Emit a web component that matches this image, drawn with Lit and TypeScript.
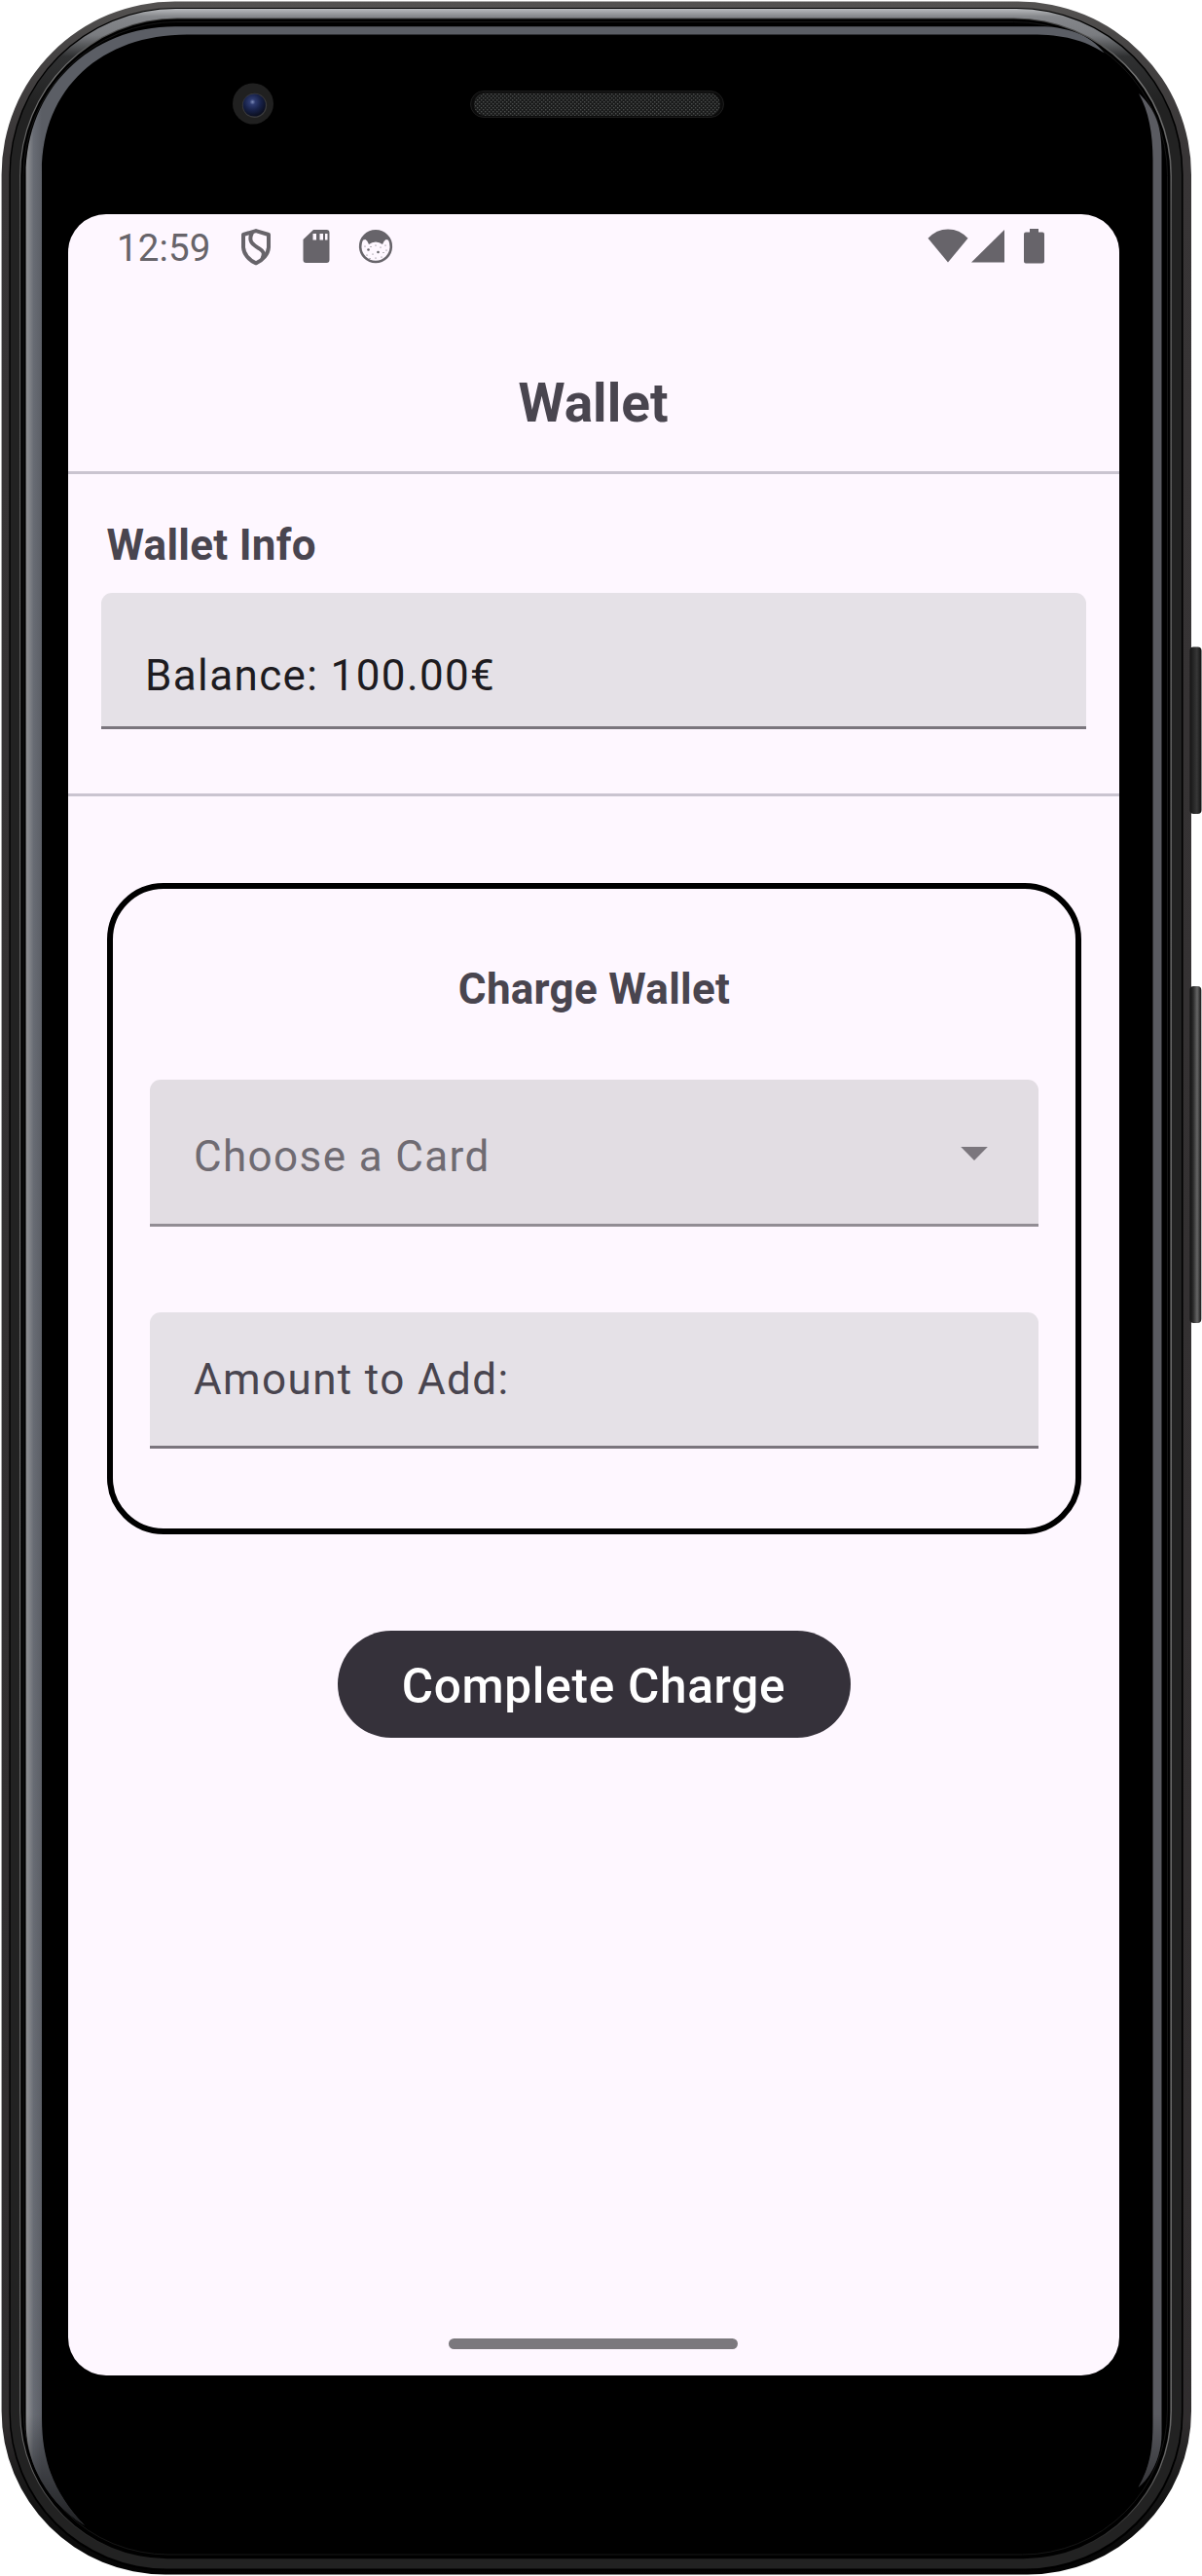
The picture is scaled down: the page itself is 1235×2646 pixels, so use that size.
import { LitElement, html, css, svg } from "lit";
import { customElement, property } from "lit/decorators.js";

/** Rounded rectangle outline, from edge to edge. */
const rr = (l: number, t: number, r: number, b: number, rt: number, rb = rt) =>
  `M${l + rt} ${t}H${r - rt}A${rt} ${rt} 0 0 1 ${r} ${t + rt}V${b - rb}A${rb} ${rb} 0 0 1 ${r - rb} ${b}H${l + rb}A${rb} ${rb} 0 0 1 ${l} ${b - rb}V${t + rt}A${rt} ${rt} 0 0 1 ${l + rt} ${t}Z`;

/** Light reflected along the inner edge of the glass. */
const glareLeft =
  "M26.6 2488V180C26.6 92 92 27.2 180 27.2H1068C1095 27.2 1120 35 1134.5 54.5C1114 41 1092 35.5 1060 35.5H192C105 35.5 43 90 43 176V2484C43 2530 57 2563 87 2594C48 2570 26.6 2530 26.6 2488Z";
const glareRight =
  "M1170 96C1187 112 1193.5 130 1193.5 156V2500C1193.5 2522 1184 2543 1169.5 2555C1180 2536 1184.5 2520 1184.5 2490V165C1184.5 136 1180 114 1170 96Z";

@customElement("device-frame")
export class DeviceFrame extends LitElement {
  static styles = css`
    :host { display: block; width: 1235px; height: 2646px; }
    svg { display: block; }
  `;
  render() {
    return html`<svg width="1235" height="2646" viewBox="0 0 1235 2646" aria-hidden="true">
      <defs>
        <linearGradient id="shell" x1="0" y1="0" x2="0" y2="2646" gradientUnits="userSpaceOnUse">
          <stop offset="0" stop-color="#555352" /><stop offset=".02" stop-color="#454343" />
          <stop offset=".06" stop-color="#383536" /><stop offset=".94" stop-color="#302d2e" />
          <stop offset=".965" stop-color="#181818" /><stop offset="1" stop-color="#020202" />
        </linearGradient>
        <linearGradient id="rim" x1="0" y1="8" x2="0" y2="108" gradientUnits="userSpaceOnUse">
          <stop offset="0" stop-color="#bfc1c4" /><stop offset=".09" stop-color="#85878b" />
          <stop offset=".28" stop-color="#7a7c80" /><stop offset=".5" stop-color="#303132" />
          <stop offset="1" stop-color="#222" />
        </linearGradient>
        <linearGradient id="line" x1="0" y1="0" x2="0" y2="2646" gradientUnits="userSpaceOnUse">
          <stop offset="0" stop-color="#333" /><stop offset=".03" stop-color="#777" />
          <stop offset=".08" stop-color="#555" /><stop offset=".5" stop-color="#6a6a6a" />
          <stop offset=".96" stop-color="#666" /><stop offset=".99" stop-color="#222" />
        </linearGradient>
        <linearGradient id="left" x1="26" y1="0" x2="43" y2="0" gradientUnits="userSpaceOnUse">
          <stop offset="0" stop-color="#8f9093" /><stop offset=".2" stop-color="#85878b" />
          <stop offset=".5" stop-color="#686c74" /><stop offset="1" stop-color="#5b5e65" />
        </linearGradient>
        <linearGradient id="fade" x1="0" y1="2480" x2="0" y2="2595" gradientUnits="userSpaceOnUse">
          <stop offset="0" stop-color="#000" stop-opacity="0" /><stop offset="1" stop-color="#000" stop-opacity=".65" />
        </linearGradient>
        <linearGradient id="key" x1="1222" y1="0" x2="1235" y2="0" gradientUnits="userSpaceOnUse">
          <stop offset="0" stop-color="#111" /><stop offset=".25" stop-color="#222" />
          <stop offset=".6" stop-color="#373737" /><stop offset="1" stop-color="#0c0c0c" />
        </linearGradient>
        <linearGradient id="keyLong" x1="1222" y1="0" x2="1235" y2="0" gradientUnits="userSpaceOnUse">
          <stop offset="0" stop-color="#0c0c0c" /><stop offset=".3" stop-color="#2b2b2b" />
          <stop offset=".62" stop-color="#666" /><stop offset=".85" stop-color="#2d2d2d" /><stop offset="1" stop-color="#0c0c0c" />
        </linearGradient>
        <radialGradient id="lens" cx=".42" cy=".36" r=".62">
          <stop offset="0" stop-color="#7d8bb8" /><stop offset=".2" stop-color="#2e3b70" />
          <stop offset=".6" stop-color="#172148" /><stop offset="1" stop-color="#0c1022" />
        </radialGradient>
        <pattern id="mesh" width="4" height="4" patternUnits="userSpaceOnUse">
          <rect width="4" height="4" fill="#1a1b1b" />
          <rect width="1.4" height="1.4" fill="#4a4d4c" /><rect x="2" y="2" width="1.4" height="1.4" fill="#4a4d4c" />
        </pattern>
      </defs>
      <path d=${rr(1.6, 1.5, 1224, 2644.5, 178, 168)} fill="url(#shell)" />
      <path d=${rr(9.4, 8, 1215.6, 2640.5, 171, 162)} fill="#000" />
      <path d=${rr(10.8, 9, 1214, 2638.5, 170, 161)} fill="url(#rim)" />
      <path d=${rr(20, 18.5, 1204, 2628.5, 162, 152)} fill="url(#line)" />
      <path d=${rr(21.2, 19.5, 1202.4, 2628.2, 161, 151)} fill="#000" />
      <path d=${rr(24, 22.5, 1199.5, 2624, 158, 149)} fill="none" stroke="#161616" stroke-width="1" />
      <rect x="1222.500" y="664.500" width="12" height="171.500" rx="4" fill="url(#key)" />
      <rect x="1222.500" y="1013" width="11.800" height="346" rx="4" fill="url(#keyLong)" />
      <path d=${glareLeft} fill="url(#left)" />
      <path d=${glareLeft} fill="url(#fade)" />
      <path d=${glareRight} fill="#5a5b61" />
      <path d=${glareRight} fill="url(#fade)" />
      <circle cx="260" cy="106.5" r="21" fill="#202020" />
      <circle cx="261.5" cy="108.3" r="12.6" fill="#3a3a3c" />
      <circle cx="261.3" cy="108" r="11.6" fill="url(#lens)" />
      <rect x="483.5" y="93.5" width="260" height="27" rx="13.5" fill="#0b0b0b" stroke="#1d1d1d" />
      <rect x="487" y="95.5" width="253" height="23.5" rx="11.7" fill="url(#mesh)" />
    </svg>`;
  }
}

@customElement("status-bar")
export class StatusBar extends LitElement {
  static styles = css`
    :host {
      display: flex; box-sizing: border-box; width: 1080px; height: 66px;
      padding: 15px 77px 0 50px; justify-content: space-between; align-items: flex-start;
      color: #67646a; font: 400 38.5px/40px Roboto, sans-serif;
    }
    .group { display: flex; align-items: flex-start; }
    .time { width: 97px; margin-right: 30px; letter-spacing: .1px; }
    .shield { margin-right: 32px; }
    .sd { margin-right: 29px; }
    .signal { margin: 1px 20px 0 3px; }
    svg { display: block; fill: currentColor; }
    .outline { fill: none; stroke: currentColor; stroke-width: 4; stroke-linejoin: round; }
  `;
  render() {
    return html`
      <div class="group">
        <span class="time">12:59</span>
        <svg class="shield" width="32" height="38" viewBox="0 0 32 38">
          <path class="outline" d="M16 2.1L29 6V18C29 26 23 32.5 16 35.3C9 32.5 3 26 3 18V6Z" />
          <path class="outline" d="M12 4C7.500 13 13 16 18 19.500C24 23 25 25 22.500 30.500" />
        </svg>
        <svg class="sd" width="28" height="36" viewBox="0 0 28 36">
          <path fill-rule="evenodd" d="M11 1H24.500Q27.500 1 27.500 4V32Q27.500 35 24.500 35H3.500Q.5 35 .5 32V11ZM10.500 5V11.500H14V5ZM17.500 5V11.500H21V5ZM23 5V11.500H25.500V5Z" />
        </svg>
        <svg width="36" height="36" viewBox="0 0 36 36">
          <circle cx="18" cy="18.200" r="15.800" fill="none" stroke="currentColor" stroke-width="2.600" />
          <path d="M4.500 11.500L7 7Q18 -2.500 29 7L31.500 11.500L28.500 11Q26.500 12 25 16Q22 13.500 18 13.500Q14 13.500 11 16Q9.500 12 7.500 11Z" />
          ${[[7, 18], [13, 18.500], [18, 17], [23, 19], [28, 17], [29, 22], [26, 24.500], [15, 26], [9, 27], [12, 30.500], [18, 30], [24, 29]].map(
            ([x, y]) => svg`<circle cx=${x} cy=${y} r=".6" />`)}
          <circle cx="10.500" cy="21.500" r="1.300" /><circle cx="20.500" cy="24" r="1.300" />
        </svg>
      </div>
      <div class="group">
        <svg width="42" height="36" viewBox="0 0 42 36"><path d="M21 34.500L.5 9.800Q9 .6 21 .5Q33 .6 41.500 9.800Z" /></svg>
        <svg class="signal" width="34" height="34" viewBox="0 0 34 34"><path d="M34 0V33.500H0Z" /></svg>
        <svg width="21" height="36" viewBox="0 0 21 36"><path d="M6 0H15V3.500H19Q21 3.500 21 5.500V33.500Q21 35.500 19 35.500H2Q0 35.500 0 33.500V5.500Q0 3.500 2 3.500H6Z" /></svg>
      </div>`;
  }
}

@customElement("filled-field")
export class FilledField extends LitElement {
  @property() text = "";
  static styles = css`
    :host {
      display: flex; box-sizing: border-box; height: 140px; padding: 0 44px 0 45px;
      align-items: center; justify-content: space-between;
      background: #e5e1e7; border-bottom: 3px solid #7a757d; border-radius: 11px 11px 0 0;
      color: #49454f; font: 400 44px/66px Roboto, sans-serif; letter-spacing: 1.375px;
    }
    :host([filled]) { color: #1d1b20; }
    :host([menu]) { height: 151px; background: #e2dde3; border-color: #928d94; color: #6f6b72; padding-right: 52px; }
    .text { padding-top: 1px; white-space: nowrap; }
    :host([filled]) .text { padding-top: 32px; }
    :host([menu]) .text { padding-top: 10px; }
  `;
  render() {
    return html`<span class="text">${this.text}</span><slot></slot>`;
  }
}

@customElement("app-root")
export class AppRoot extends LitElement {
  static styles = css`
    :host { display: block; width: 1235px; height: 2646px; background: #fff; font-family: Roboto, sans-serif; }
    .device { display: grid; width: 1235px; height: 2646px; overflow: hidden; }
    .frame, .screen { grid-area: 1 / 1; }
    .screen {
      display: flex; flex-direction: column; box-sizing: border-box;
      width: 1080px; height: 2220px; margin: 220px 0 0 70px;
      background: #fef7ff; border-radius: 39px; overflow: hidden; color: #49454f;
    }
    h1, h2 { margin: 0; font-weight: 700; white-space: nowrap; }
    h1 { font-size: 55px; line-height: 66px; text-align: center; padding: 94.500px 1px 37.500px 0; }
    h2 { font-size: 44px; line-height: 52px; letter-spacing: .275px; }
    .info { border: solid #cac4d0; border-width: 3px 0; padding: 47px 34px 0; height: 334px; box-sizing: border-box; }
    .info h2 { padding-left: 5.500px; margin-bottom: 23px; }
    .card {
      margin: 89px 39px 0 40px; height: 669px; box-sizing: border-box;
      border: 6px solid #000; border-radius: 58px; padding: 77px 38px 0;
      display: flex; flex-direction: column;
    }
    .card h2 { text-align: center; margin-bottom: 67px; }
    .amount { margin-top: 88px; }
    .complete {
      align-self: center; margin-top: 99px; width: 527px; height: 110px; padding: 3px 0 0;
      border: 0; border-radius: 55px; background: #35313a; color: #fff; white-space: nowrap;
      font: 500 49.500px/60px Roboto, sans-serif; letter-spacing: .72px;
    }
    .arrow { display: block; fill: #7b767d; margin-top: 3px; }
    .home { width: 297px; height: 11px; border-radius: 6px; background: #7b787d; margin: auto 392px 27px 391px; }
  `;
  render() {
    return html`<div class="device">
      <device-frame class="frame"></device-frame>
      <main class="screen">
        <status-bar></status-bar>
        <h1>Wallet</h1>
        <section class="info">
          <h2>Wallet Info</h2>
          <filled-field filled text="Balance: 100.00€"></filled-field>
        </section>
        <section class="card">
          <h2>Charge Wallet</h2>
          <filled-field menu text="Choose a Card">
            <svg class="arrow" width="28" height="14" viewBox="0 0 28 14"><path d="M.2 0H27.800L14 14Z" /></svg>
          </filled-field>
          <filled-field class="amount" text="Amount to Add:"></filled-field>
        </section>
        <button class="complete">Complete Charge</button>
        <div class="home"></div>
      </main>
    </div>`;
  }
}
